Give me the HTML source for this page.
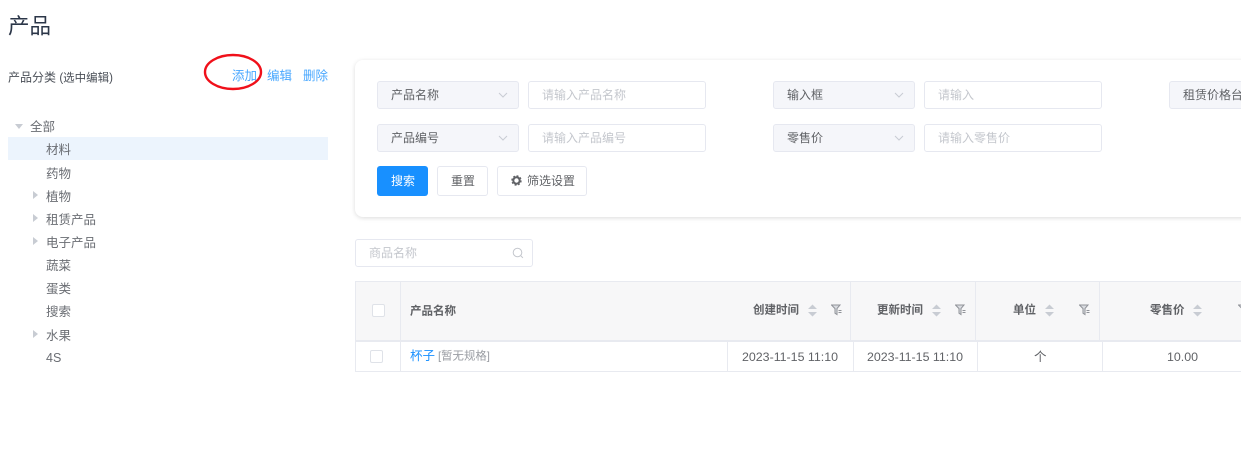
<!DOCTYPE html>
<html lang="zh">
<head>
<meta charset="utf-8">
<style>
html,body{margin:0;padding:0;width:1241px;height:463px;overflow:hidden;background:#fff}
body{font-family:"Liberation Sans","Noto Sans CJK SC",sans-serif;font-size:12px;color:#606266}
#p{position:absolute;left:0;top:0;width:1241px;height:463px;overflow:hidden;filter:blur(.35px)}
.a{position:absolute;white-space:nowrap}
.t{transform:translateY(-50%);line-height:1}
.box{position:absolute;box-sizing:border-box;border:1px solid #e6e8f0;border-radius:3px;background:#fff}
.sel{background:#f5f6fa;height:28px;width:142px}
.ipt{height:28px;width:178px}
.tree{font-size:12.5px;color:#6a6d73}
.link{color:#1890ff;font-size:12.5px;opacity:.8}
.ph{color:#c4c7cd}
.th{font-weight:700;color:#606266;font-size:11.5px}
.arrow{position:absolute;width:0;height:0;border-top:4px solid transparent;border-bottom:4px solid transparent;border-left:5px solid #c8ccd3}
.check{position:absolute;box-sizing:border-box;width:13px;height:13px;border:1px solid #dfe2e8;border-radius:2px;background:#fff}
.v{position:absolute;width:1px;background:#e8eaf0}
</style>
</head>
<body>
<div id="p">
<div class="a t" style="left:8px;top:26.5px;font-size:21.5px;color:#2b3648">产品</div>
<div class="a t" style="left:8px;top:77.5px;font-size:12px;color:#4a4f57">产品分类 <span style="font-size:11.5px">(选中编辑)</span></div>
<div class="a t link" style="left:232px;top:75.5px">添加</div>
<div class="a t link" style="left:267px;top:75.5px">编辑</div>
<div class="a t link" style="left:303px;top:75.5px">删除</div>
<svg class="a" style="left:202px;top:52px" width="62" height="40"><ellipse cx="31" cy="20" rx="28" ry="17" fill="none" stroke="#f0101a" stroke-width="2.4"/></svg>

<div class="a" style="left:8px;top:137px;width:320px;height:23px;background:#ecf4fd"></div>
<div class="a" style="left:15px;top:124px;width:0;height:0;border-left:4px solid transparent;border-right:4px solid transparent;border-top:5px solid #c8ccd3"></div>
<div class="a t tree" style="left:30px;top:126.5px">全部</div>
<div class="a t tree" style="left:46px;top:150px">材料</div>
<div class="a t tree" style="left:46px;top:173.5px">药物</div>
<div class="arrow" style="left:33px;top:191px"></div>
<div class="a t tree" style="left:46px;top:196.5px">植物</div>
<div class="arrow" style="left:33px;top:214px"></div>
<div class="a t tree" style="left:46px;top:219.5px">租赁产品</div>
<div class="arrow" style="left:33px;top:237px"></div>
<div class="a t tree" style="left:46px;top:242.5px">电子产品</div>
<div class="a t tree" style="left:46px;top:266px">蔬菜</div>
<div class="a t tree" style="left:46px;top:289px">蛋类</div>
<div class="a t tree" style="left:46px;top:312px">搜索</div>
<div class="arrow" style="left:33px;top:330px"></div>
<div class="a t tree" style="left:46px;top:335.5px">水果</div>
<div class="a t tree" style="left:46px;top:358px">4S</div>

<div class="a" style="left:355px;top:60px;width:900px;height:157px;box-sizing:border-box;background:#fff;border-radius:8px;box-shadow:0 1px 5px rgba(0,0,0,.14)"></div>

<div class="box sel" style="left:377px;top:81px"></div>
<div class="a t" style="left:391px;top:95px">产品名称</div>
<svg class="a" style="left:498px;top:91px" width="10" height="8"><path d="M1 2l4 4 4-4" fill="none" stroke="#c8ccd3"/></svg>
<div class="box ipt" style="left:528px;top:81px"></div>
<div class="a t ph" style="left:542px;top:95px">请输入产品名称</div>

<div class="box sel" style="left:377px;top:124px"></div>
<div class="a t" style="left:391px;top:138px">产品编号</div>
<svg class="a" style="left:498px;top:134px" width="10" height="8"><path d="M1 2l4 4 4-4" fill="none" stroke="#c8ccd3"/></svg>
<div class="box ipt" style="left:528px;top:124px"></div>
<div class="a t ph" style="left:542px;top:138px">请输入产品编号</div>

<div class="box sel" style="left:773px;top:81px"></div>
<div class="a t" style="left:787px;top:95px">输入框</div>
<svg class="a" style="left:894px;top:91px" width="10" height="8"><path d="M1 2l4 4 4-4" fill="none" stroke="#c8ccd3"/></svg>
<div class="box ipt" style="left:924px;top:81px"></div>
<div class="a t ph" style="left:938px;top:95px">请输入</div>

<div class="box sel" style="left:773px;top:124px"></div>
<div class="a t" style="left:787px;top:138px">零售价</div>
<svg class="a" style="left:894px;top:134px" width="10" height="8"><path d="M1 2l4 4 4-4" fill="none" stroke="#c8ccd3"/></svg>
<div class="box ipt" style="left:924px;top:124px"></div>
<div class="a t ph" style="left:938px;top:138px">请输入零售价</div>

<div class="box sel" style="left:1169px;top:81px"></div>
<div class="a t" style="left:1183px;top:95px">租赁价格台</div>

<div class="a" style="left:377px;top:166px;width:51px;height:30px;background:#1890ff;border-radius:3px"></div>
<div class="a t" style="left:391px;top:181px;color:#fff">搜索</div>
<div class="box" style="left:437px;top:166px;width:51px;height:30px"></div>
<div class="a t" style="left:451px;top:181px">重置</div>
<div class="box" style="left:497px;top:166px;width:90px;height:30px"></div>
<svg class="a" style="left:511px;top:175px" width="11" height="11" viewBox="0 0 11 11"><circle cx="5.5" cy="5.5" r="3.2" fill="none" stroke="#606266" stroke-width="2"/><circle cx="5.5" cy="5.5" r="4.6" fill="none" stroke="#606266" stroke-width="1.2" stroke-dasharray="2 1.6"/></svg>
<div class="a t" style="left:527px;top:181px">筛选设置</div>

<div class="box" style="left:355px;top:239px;width:178px;height:28px"></div>
<div class="a t ph" style="left:369px;top:253px">商品名称</div>
<svg class="a" style="left:512px;top:247px" width="12" height="12" viewBox="0 0 12 12"><circle cx="5.5" cy="5.5" r="4.3" fill="none" stroke="#c4c7cd"/><path d="M8.7 8.7l2.2 2.2" stroke="#c4c7cd"/></svg>

<div class="a" style="left:355px;top:282px;width:886px;height:59px;background:#f7f7f8"></div>
<div class="a" style="left:355px;top:281px;width:886px;height:1px;background:#e8eaf0"></div>
<div class="a" style="left:355px;top:340px;width:886px;height:2px;background:#e8eaf0"></div>
<div class="a" style="left:355px;top:371px;width:886px;height:1px;background:#e8eaf0"></div>
<div class="v" style="left:355px;top:281px;height:91px"></div>
<div class="v" style="left:400px;top:281px;height:91px"></div>
<div class="v" style="left:850px;top:282px;height:59px"></div>
<div class="v" style="left:975px;top:282px;height:59px"></div>
<div class="v" style="left:1099px;top:282px;height:59px"></div>
<div class="v" style="left:727px;top:341px;height:30px"></div>
<div class="v" style="left:853px;top:341px;height:30px"></div>
<div class="v" style="left:977px;top:341px;height:30px"></div>
<div class="v" style="left:1102px;top:341px;height:30px"></div>

<div class="check" style="left:372px;top:304px"></div>
<div class="check" style="left:370px;top:350px"></div>

<div class="a t th" style="left:410px;top:311.5px">产品名称</div>
<div class="a t th" style="left:753px;top:311px">创建时间</div>
<div class="a t th" style="left:877px;top:311px">更新时间</div>
<div class="a t th" style="left:1013px;top:311px">单位</div>
<div class="a t th" style="left:1150px;top:311px">零售价</div>

<svg class="a" style="left:807px;top:304px" width="11" height="13"><path d="M5.5 0.5L10 5H1zM5.5 12.5L1 8H10z" fill="#c8ccd3"/></svg>
<svg class="a" style="left:931px;top:304px" width="11" height="13"><path d="M5.5 0.5L10 5H1zM5.5 12.5L1 8H10z" fill="#c8ccd3"/></svg>
<svg class="a" style="left:1044px;top:304px" width="11" height="13"><path d="M5.5 0.5L10 5H1zM5.5 12.5L1 8H10z" fill="#c8ccd3"/></svg>
<svg class="a" style="left:1192px;top:304px" width="11" height="13"><path d="M5.5 0.5L10 5H1zM5.5 12.5L1 8H10z" fill="#c8ccd3"/></svg>

<svg class="a" style="left:831px;top:304px" width="11" height="12" viewBox="0 0 11 12"><path d="M0.5 1h8.5l-3 3.6v6l-2-1.4V4.6z" fill="#dadce1" stroke="#909399"/><path d="M7.5 6.5h3M7.5 8.5h3" stroke="#909399"/></svg>
<svg class="a" style="left:955px;top:304px" width="11" height="12" viewBox="0 0 11 12"><path d="M0.5 1h8.5l-3 3.6v6l-2-1.4V4.6z" fill="#dadce1" stroke="#909399"/><path d="M7.5 6.5h3M7.5 8.5h3" stroke="#909399"/></svg>
<svg class="a" style="left:1079px;top:304px" width="11" height="12" viewBox="0 0 11 12"><path d="M0.5 1h8.5l-3 3.6v6l-2-1.4V4.6z" fill="#dadce1" stroke="#909399"/><path d="M7.5 6.5h3M7.5 8.5h3" stroke="#909399"/></svg>
<svg class="a" style="left:1238px;top:304px" width="11" height="12" viewBox="0 0 11 12"><path d="M0.5 1h8.5l-3 3.6v6l-2-1.4V4.6z" fill="#dadce1" stroke="#909399"/></svg>

<div class="a t" style="left:410px;top:356px;font-size:12.5px;color:#1890ff">杯子</div>
<div class="a t" style="left:438px;top:356.5px;font-size:11.4px;color:#9a9da3">[暂无规格]</div>
<div class="a t" style="left:742px;top:356.5px;font-size:12.4px">2023-11-15 11:10</div>
<div class="a t" style="left:867px;top:356.5px;font-size:12.4px">2023-11-15 11:10</div>
<div class="a t" style="left:1034px;top:356.5px;font-size:12.5px">个</div>
<div class="a t" style="left:1167px;top:356.5px;font-size:12.4px">10.00</div>
</div>
</body>
</html>
